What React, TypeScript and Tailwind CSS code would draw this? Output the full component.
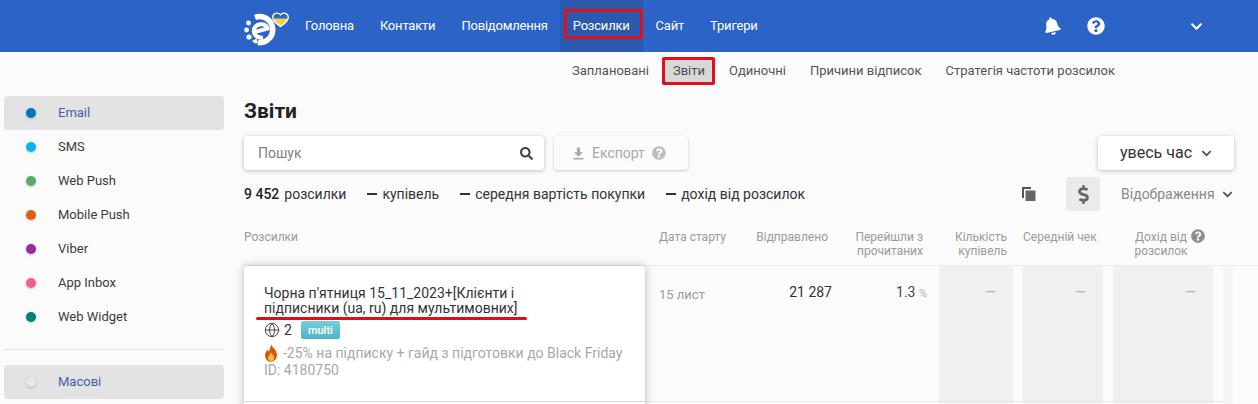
import { Globe } from "lucide-react";
import { FaBell, FaQuestionCircle, FaChevronDown, FaSearch, FaDollarSign } from "react-icons/fa";

function Logo() {
  return (
    <svg viewBox="0 0 48 38" className="w-[48px] h-[38px]">
      {/* ring */}
      <path d="M12 9.500A13 13 0 1 1 15 34.500" fill="none" stroke="#fff" strokeWidth="5.500" />
      {/* e */}
      <path d="M10 24.500 24.500 20.500C23.500 15.500 14.500 14.500 11.500 20C9 25.500 13.500 30.500 20 29.500" fill="none" stroke="#fff" strokeWidth="4" />
      {/* left fragments */}
      <circle cx="5.500" cy="15" r="2.400" fill="#fff" />
      <circle cx="3.600" cy="22" r="2.400" fill="#fff" />
      <circle cx="6" cy="29" r="2.600" fill="#fff" />
      <path d="M9 33l4.500-2.500 1.500 4.500-3 .5z" fill="#fff" />
      {/* heart */}
      <path d="M37.500 18.500c-3-2.200-7.800-5-7.800-9.300 0-3.800 5-5.500 7.800-2.500 2.800-3 7.800-1.300 7.800 2.500 0 4.300-4.800 7.100-7.800 9.300z" fill="#f2d24b" />
      <path d="M30 10.500c-.8-4 4.800-6.500 7.500-3.800 2.700-2.700 8.300-.2 7.500 3.800z" fill="#2c66bd" />
      <path d="M37.500 18.500c-3-2.200-7.800-5-7.800-9.300 0-3.800 5-5.500 7.800-2.500 2.800-3 7.800-1.300 7.800 2.500 0 4.300-4.800 7.100-7.800 9.300z" fill="none" stroke="#fff" strokeWidth="1.300" />
    </svg>
  );
}

function Flame() {
  return (
    <svg viewBox="0 0 16 20" className="w-[14px] h-[18px] shrink-0">
      <path d="M8 0c1 3.500 6.800 6 6.800 12.300C14.800 16.500 11.800 20 8 20S1.200 16.800 1.200 12.800C1.200 9.800 3 8 3.800 6c.8 1 1 2 1.600 2.600C6.200 6 7.800 3.500 8 0z" fill="#d9540f" />
      <path d="M8 9c.6 2 3.600 3.500 3.600 6.500 0 2.200-1.600 3.800-3.600 3.800S4.400 17.700 4.400 15.500C4.400 13 7.400 11.500 8 9z" fill="#fbc02d" />
    </svg>
  );
}

const channels = [
  ["Email", "bg-[#0277bd]"],
  ["SMS", "bg-[#03b5f5]"],
  ["Web Push", "bg-[#59ab69]"],
  ["Mobile Push", "bg-[#e65c0f]"],
  ["Viber", "bg-[#9c27a0]"],
  ["App Inbox", "bg-[#f45e95]"],
  ["Web Widget", "bg-[#00807a]"],
];

function SideItem({ label, dot, active }: { label: string; dot: string; active?: boolean }) {
  return (
    <div className={`h-[34px] flex items-center rounded-[4px] ${active ? "bg-[#e3e3e3]" : ""}`}>
      <span className={`ml-[22px] w-[10px] h-[10px] rounded-full shadow-[0_1px_3px_rgba(0,0,0,0.2)] ${dot}`} />
      <span className={`ml-[22px] text-[13px] ${active ? "text-[#3f62b5]" : "text-[#3c3c3c]"}`}>{label}</span>
    </div>
  );
}

export default function App() {
  return (
    <div className="w-[1258px] h-[404px] overflow-hidden bg-[#fbfbfb] font-['Roboto',sans-serif] text-[#333]">
      <header className="h-[52px] bg-[#2b63c7] flex items-stretch text-white text-[13px]">
        <div className="ml-[243px] w-[62px] flex items-center pt-[1px]"><Logo /></div>
        <nav className="flex items-stretch tracking-[-0.2px]">
          <a className="flex items-center">Головна</a>
          <a className="flex items-center ml-[26px]">Контакти</a>
          <a className="flex items-center ml-[26px]">Повідомлення</a>
          <a className="relative flex items-center ml-[12px] px-[13px] bg-[#2a5aae]">
            Розсилки
            <span className="absolute left-[4px] right-0 top-[9px] h-[30px] border-[3px] border-[#e0101a]" />
          </a>
          <a className="flex items-center ml-[13px]">Сайт</a>
          <a className="flex items-center ml-[26px]">Тригери</a>
        </nav>
        <div className="ml-[285px] flex items-center">
          <FaBell className="w-[18px] h-[18px] -rotate-[12deg]" />
        </div>
        <div className="ml-[26px] flex items-center"><FaQuestionCircle className="w-[18px] h-[18px]" /></div>
        <div className="ml-[85px] flex items-center"><FaChevronDown className="w-[13px] h-[13px]" /></div>
      </header>

      <div className="flex">
        <aside className="ml-[4px] w-[220px] pt-[44px] shrink-0">
          <SideItem label={channels[0][0]} dot={channels[0][1]} active />
          {channels.slice(1).map(([l, d]) => <SideItem key={l} label={l} dot={d} />)}
          <div className="mt-[15px] mb-[15px] h-px bg-[#e4e4e4]" />
          <SideItem label="Масові" dot="bg-[#e8e8e8]" active />
        </aside>

        <main className="ml-[20px] w-[1014px] shrink-0">
          <div className="h-[36px] flex items-center text-[13px] text-[#555] pl-[328px] pt-[1px]">
            <span>Заплановані</span>
            <span className="relative ml-[24px] text-[#333]">
              Звіти
              <span className="absolute -left-[11px] -right-[10px] -top-[4px] -bottom-[5px] rounded-[2px] border-[3px] border-[#e0101a] bg-[#8888884d]" />
            </span>
            <span className="ml-[24px]">Одиночні</span>
            <span className="ml-[24px]">Причини відписок</span>
            <span className="ml-[24px]">Стратегія частоти розсилок</span>
          </div>

          <h1 className="mt-[10px] h-[26px] leading-[26px] text-[21px] font-bold text-[#222]">Звіти</h1>

          <div className="mt-[12px] flex items-center h-[34px]">
            <div className="w-[300px] h-[34px] bg-white rounded-[4px] shadow-[0_1px_4px_rgba(0,0,0,0.25)] flex items-center justify-between pl-[14px] pr-[11px]">
              <span className="text-[14px] text-[#808080]">Пошук</span>
              <FaSearch className="w-[13px] h-[13px] text-[#444]" />
            </div>
            <div className="ml-[10px] w-[134px] h-[34px] rounded-[4px] bg-[#fbfbfb] shadow-[0_1px_3px_rgba(0,0,0,0.2)] flex items-center pl-[19px] text-[#a8a8a8] text-[14px]">
              <svg viewBox="0 0 12 13" className="w-[11px] h-[13px]">
                <path d="M4.300 0h3.400v5H11L6 10 1 5h3.300z" fill="currentColor" />
                <rect x="0.500" y="11.300" width="11" height="1.700" fill="currentColor" />
              </svg>
              <span className="ml-[8px]">Експорт</span>
              <FaQuestionCircle className="ml-[7px] w-[14px] h-[14px] text-[#bdbdbd]" />
            </div>
            <div className="ml-auto mr-[24px] w-[136px] h-[34px] bg-white rounded-[4px] shadow-[0_1px_4px_rgba(0,0,0,0.25)] flex items-center pl-[22px] text-[16px] text-[#333]">
              увесь час <FaChevronDown className="ml-[9px] w-[11px] h-[11px] text-[#555]" />
            </div>
          </div>

          <div className="mt-[3px] h-[42px] flex items-center text-[14px] text-[#333] whitespace-nowrap">
            <span className="font-medium text-[#222]">9 452</span>
            <span className="ml-[5px]">розсилки</span>
            <span className="ml-[21px] w-[10px] h-[2px] bg-[#333]" /><span className="ml-[5px]">купівель</span>
            <span className="ml-[21px] w-[10px] h-[2px] bg-[#333]" /><span className="ml-[5px]">середня вартість покупки</span>
            <span className="ml-[21px] w-[10px] h-[2px] bg-[#333]" /><span className="ml-[5px]">дохід від розсилок</span>
            <svg viewBox="0 0 14 14" className="ml-[217px] w-[14px] h-[14px]">
              <path d="M0 0h9v2H2v9H0z" fill="#555" /><rect x="3.500" y="3.500" width="10" height="10.500" fill="#666" />
            </svg>
            <span className="ml-[30px] w-[34px] h-[34px] rounded-[4px] bg-[#ebebeb] flex items-center justify-center text-[#666]"><FaDollarSign className="w-[17px] h-[19px]" /></span>
            <span className="ml-[21px] text-[#888]">Відображення</span>
            <FaChevronDown className="ml-[7px] w-[11px] h-[11px] text-[#555]" />
          </div>

          <div className="mt-[8px] h-[43px] flex text-[12px] leading-[14px] text-[#9a9a9a] border-b border-[#ececec] pt-[7px]">
            <div className="w-[415px]">Розсилки</div>
            <div className="w-[82px]">Дата старту</div>
            <div className="w-[87px] text-right">Відправлено</div>
            <div className="w-[95px] text-right">Перейшли з прочитаних</div>
            <div className="w-[84px] text-right">Кількість купівель</div>
            <div className="w-[90px] pl-[16px] whitespace-nowrap">Середній чек</div>
            <div className="w-[100px] pl-[36px] relative">
              <span className="block w-[56px] text-center">Дохід від розсилок</span>
              <FaQuestionCircle className="absolute left-[94px] -top-[1px] w-[14px] h-[14px] text-[#8e8e8e]" />
            </div>
          </div>

          <div className="flex h-[140px]">
            <div className="w-[401px] shrink-0 bg-white rounded-t-[4px] shadow-[0_0_8px_rgba(0,0,0,0.28)] relative z-10 h-[145px] pt-[20px] px-[20px] text-[14px] leading-[15px] text-[#333]">
              <div className="w-[300px] relative">
                Чорна п'ятниця 15_11_2023+[Клієнти і підписники (ua, ru) для мультимовних]
                <span className="absolute left-[-8px] top-[31px] w-[271px] h-[3px] rounded-full bg-[#d8101a]" />
              </div>
              <div className="mt-[4px] h-[20px] flex items-center">
                <Globe size={16} strokeWidth={1.5} className="text-[#444]" />
                <span className="ml-[4px] text-[14px]">2</span>
                <span className="ml-[9px] h-[18px] w-[39px] rounded-[2px] bg-gradient-to-b from-[#74cfdc] to-[#4fb4c9] text-white text-[11px] font-medium flex items-center justify-center">multi</span>
              </div>
              <div className="mt-[4px] flex items-center text-[14px] text-[#a8a8a8] whitespace-nowrap"><Flame /><span className="ml-[5px]">-25% на підписку + гайд з підготовки до Black Friday</span></div>
              <div className="mt-[1px] text-[14px] text-[#a8a8a8]">ID: 4180750</div>
              <div className="absolute left-0 right-0 top-[135px] h-px bg-[#d8d8d8]" />
            </div>
            <div className="relative flex-1 flex items-start text-[13px]">
              <div className="w-[82px] pl-[14px] mt-[19px] text-[#9a9a9a] whitespace-nowrap shrink-0">15 лист</div>
              <div className="w-[105px] text-right mt-[16px] text-[14px] text-[#333] shrink-0">21 287</div>
              <div className="w-[95px] text-right mt-[16px] text-[14px] text-[#444] shrink-0">1.3 <span className="text-[11px] text-[#aaa]">%</span></div>
              <div className="ml-[12px] w-[74px] h-full bg-[#f0f0f0] text-right pr-[17px] pt-[16px] text-[14px] text-[#b5b5b5] shrink-0">—</div>
              <div className="ml-[10px] w-[80px] h-full bg-[#f0f0f0] text-right pr-[17px] pt-[16px] text-[14px] text-[#b5b5b5] shrink-0">—</div>
              <div className="ml-[10px] w-[100px] h-full bg-[#f0f0f0] text-right pr-[17px] pt-[16px] text-[14px] text-[#b5b5b5] shrink-0">—</div>
              <div className="ml-[10px] w-[10px] h-full bg-[#f5f5f5] shrink-0" />
              <div className="absolute left-0 w-[580px] top-[135px] h-px bg-[#e8e8e8]" />
            </div>
          </div>
        </main>
      </div>
    </div>
  );
}
